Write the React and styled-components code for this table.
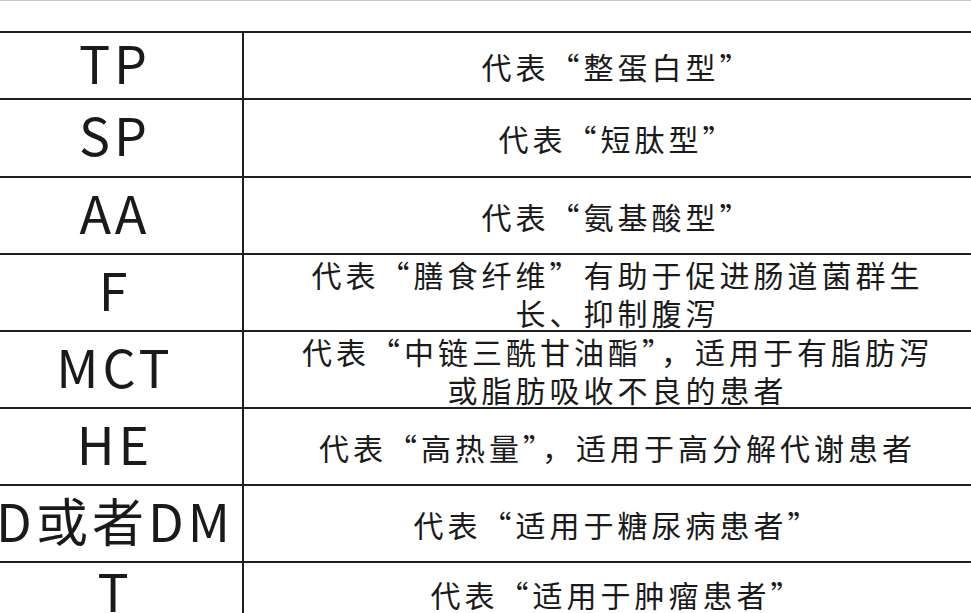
import React from "react";
import styled, { createGlobalStyle } from "styled-components";

const rows = [
  { code: "TP", lines: ["代表“整蛋白型”"], height: 67 },
  { code: "SP", lines: ["代表“短肽型”"], height: 78 },
  { code: "AA", lines: ["代表“氨基酸型”"], height: 77 },
  { code: "F", lines: ["代表“膳食纤维”有助于促进肠道菌群生", "长、抑制腹泻"], height: 77 },
  { code: "MCT", lines: ["代表“中链三酰甘油酯”，适用于有脂肪泻", "或脂肪吸收不良的患者"], height: 77 },
  { code: "HE", lines: ["代表“高热量”，适用于高分解代谢患者"], height: 77 },
  { code: "D或者DM", lines: ["代表“适用于糖尿病患者”"], height: 77 },
  { code: "T", lines: ["代表“适用于肿瘤患者”"], height: 64 },
];

const GlobalStyle = createGlobalStyle`
  html, body {
    margin: 0;
    padding: 0;
    background: #fff;
    overflow: hidden;
  }
  body {
    font-family: "Noto Sans CJK SC", "Noto Sans", sans-serif;
    color: #1a1a1a;
  }
`;

const Page = styled.div`
  width: 971px;
  height: 613px;
  overflow: hidden;
  border-top: 1px solid #c8c8c8;
  box-sizing: border-box;
  padding-top: 30px;
`;

const Table = styled.div`
  border-top: 2px solid #1e1e1e;
`;

const Row = styled.div`
  display: grid;
  grid-template-columns: 244px 1fr;
  height: ${(p) => p.$h}px;
  box-sizing: border-box;
  border-bottom: 2px solid #1e1e1e;
`;

const CodeCell = styled.div`
  border-right: 2px solid #1e1e1e;
  display: flex;
  align-items: center;
  justify-content: center;
  font-size: 52px;
  line-height: 1;
  letter-spacing: 4px;
  white-space: nowrap;
  padding: 0 12px 8px 0;
`;

const TextCell = styled.div`
  display: flex;
  flex-direction: column;
  align-items: center;
  justify-content: ${(p) => (p.$multi ? "flex-start" : "center")};
  font-size: 30px;
  letter-spacing: 4px;
  line-height: 38px;
  padding: 0 0 0 16px;
  box-sizing: border-box;
  white-space: nowrap;
`;

const Line = styled.span`
  display: block;
  padding-left: 4px;
`;

export default function App() {
  return (
    <>
      <GlobalStyle />
      <Page>
        <Table>
          {rows.map((r) => (
            <Row key={r.code} $h={r.height}>
              <CodeCell>{r.code}</CodeCell>
              <TextCell $multi={r.lines.length > 1}>
                {r.lines.map((l) => (
                  <Line key={l}>{l}</Line>
                ))}
              </TextCell>
            </Row>
          ))}
        </Table>
      </Page>
    </>
  );
}
